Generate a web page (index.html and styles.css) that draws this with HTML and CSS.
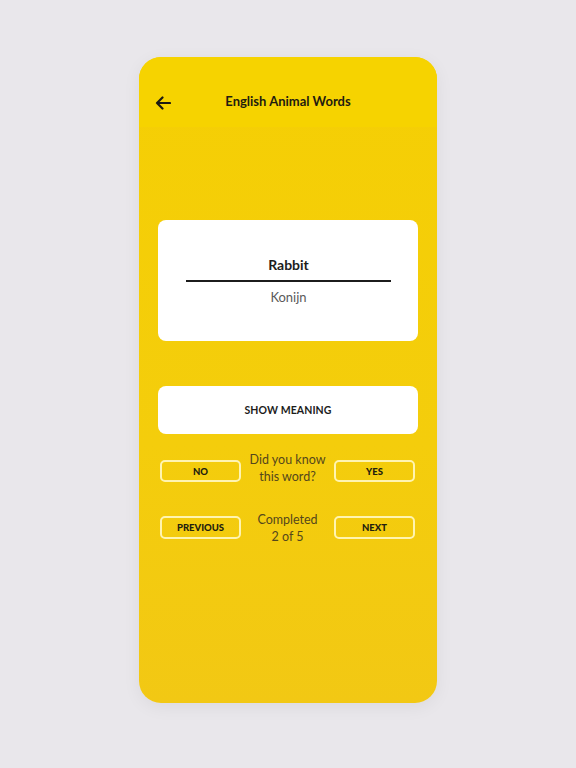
FILE: index.html
```html
<!DOCTYPE html>
<html>
<head>
<meta charset="utf-8">
<link rel="stylesheet" href="styles.css">
</head>
<body>
<div class="phone">
  <header class="header">
    <svg class="back" width="16" height="14" viewBox="0 0 16 14" fill="none" stroke="#1c1a12" stroke-width="2.2" stroke-linecap="round" stroke-linejoin="round"><path d="M15 7H2M7.5 1.5L2 7l5.5 5.5"/></svg>
    <div class="title">English Animal Words</div>
  </header>
  <main class="content">
    <section class="card">
      <div class="word">Rabbit</div>
      <div class="divider"></div>
      <div class="meaning">Konijn</div>
    </section>
    <button class="show">SHOW MEANING</button>
    <div class="row row-know">
      <button class="outline">NO</button>
      <div class="label">Did you know<br>this word?</div>
      <button class="outline">YES</button>
    </div>
    <div class="row row-nav">
      <button class="outline">PREVIOUS</button>
      <div class="label">Completed<br>2 of 5</div>
      <button class="outline">NEXT</button>
    </div>
  </main>
</div>
</body>
</html>
```

FILE: styles.css
```css
html, body {
  margin: 0;
  padding: 0;
}
body {
  background: #e9e7eb;
  font-family: Lato, "Noto Sans", sans-serif;
  height: 768px;
  overflow: hidden;
}
.phone {
  width: 298px;
  height: 646px;
  margin: 57px auto 0;
  border-radius: 22px;
  background: linear-gradient(180deg, #f5cf04 0%, #f4cd0c 60%, #f2c814 100%);
  box-shadow: 0 4px 18px rgba(0, 0, 0, 0.06);
  overflow: hidden;
}
.header {
  height: 70px;
  background: #f6d300;
  display: flex;
  align-items: center;
  position: relative;
  padding: 22px 0 0 16px;
  box-sizing: border-box;
}
.back {
  display: block;
}
.title {
  position: absolute;
  left: 0;
  right: 0;
  top: 36px;
  text-align: center;
  font-weight: 700;
  font-size: 13px;
  color: #1f1c10;
  line-height: 16px;
  pointer-events: none;
}
.content {
  padding: 93px 0 0;
  display: flex;
  flex-direction: column;
  align-items: center;
}
.card {
  width: 260px;
  height: 121px;
  background: #fff;
  border-radius: 8px;
  box-sizing: border-box;
  padding: 36px 27px 0 28px;
  display: flex;
  flex-direction: column;
  align-items: stretch;
  text-align: center;
}
.word {
  font-weight: 700;
  font-size: 14px;
  line-height: 18px;
  color: #1c1c1c;
}
.divider {
  height: 1.5px;
  background: #1c1c1c;
  margin-top: 6px;
}
.meaning {
  font-size: 13px;
  line-height: 18px;
  color: #5a5a5a;
  margin-top: 6px;
}
.show {
  width: 260px;
  height: 48px;
  margin-top: 45px;
  border: none;
  border-radius: 8px;
  background: #fff;
  font-family: Lato, "Noto Sans", sans-serif;
  font-weight: 700;
  font-size: 10.5px;
  color: #1c1c1c;
  letter-spacing: 0.1px;
}
.row {
  width: 100%;
  box-sizing: border-box;
  padding: 0 22px 0 21px;
  display: grid;
  grid-template-columns: 81px 1fr 81px;
  align-items: center;
}
.row-know {
  margin-top: 18px;
}
.row-nav {
  margin-top: 27px;
}
.label {
  text-align: center;
  font-size: 12.5px;
  line-height: 16.5px;
  color: #54471c;
}
.outline {
  height: 22px;
  border: 2px solid #fff4b0;
  border-radius: 5px;
  background: transparent;
  font-family: Lato, "Noto Sans", sans-serif;
  font-weight: 900;
  font-size: 9.5px;
  color: #22200f;
  padding: 0;
}
.row-know .outline {
  margin-top: 5px;
}
.row-nav .outline {
  height: 23px;
  margin-bottom: 3px;
}
```
